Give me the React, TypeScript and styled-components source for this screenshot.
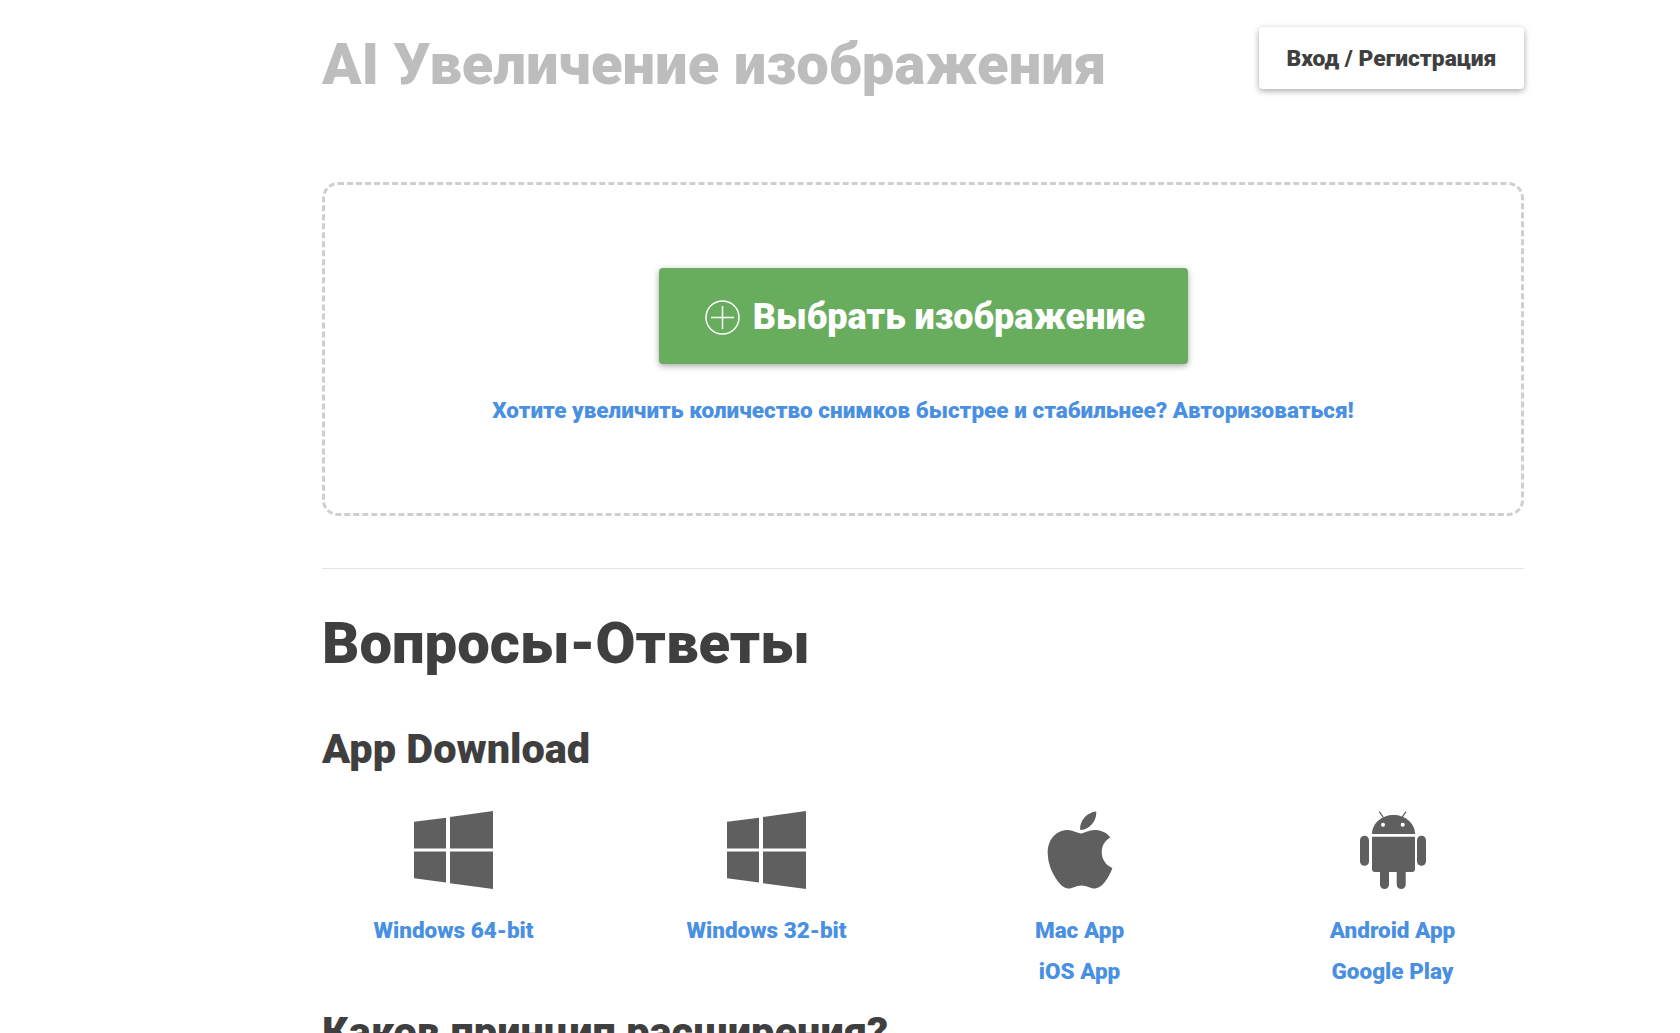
import * as React from 'react';
import styled, { createGlobalStyle } from 'styled-components';
import { FaApple } from 'react-icons/fa';

const GlobalStyle = createGlobalStyle`
  html, body {
    margin: 0;
    padding: 0;
    background: #fff;
    height: 1033px;
    overflow: hidden;
    font-family: Roboto, "Liberation Sans", sans-serif;
  }
`;

const Page = styled.div`
  width: 1202px;
  margin-left: 322px;
`;

const Header = styled.header`
  display: flex;
  justify-content: space-between;
  align-items: flex-start;
  padding-top: 27px;
  height: 182px;
  box-sizing: border-box;
`;

const Title = styled.h1`
  margin: 6px 0 0;
  font-size: 58px;
  line-height: 62px;
  font-weight: 900;
  color: #bdbdbd;
`;

const LoginButton = styled.button`
  width: 265px;
  height: 62px;
  border: none;
  border-radius: 4px;
  background: #fff;
  color: #3f3f3f;
  font: 900 22.8px Roboto, sans-serif;
  box-shadow: 0 2px 6px rgba(0, 0, 0, 0.35);
`;

const DropZone = styled.section`
  height: 334px;
  box-sizing: border-box;
  border: 3px dashed #cfcfcf;
  border-radius: 16px;
  display: flex;
  flex-direction: column;
  align-items: center;
  padding-top: 83px;
`;

const UploadButton = styled.button`
  width: 529px;
  height: 96px;
  padding: 2px 0 0 4px;
  border: none;
  border-radius: 4px;
  background: #68ad5e;
  color: #fff;
  font: 900 36px Roboto, sans-serif;
  display: flex;
  align-items: center;
  justify-content: center;
  gap: 13px;
  box-shadow: 0 2px 6px rgba(0, 0, 0, 0.35);
`;

const PlusIcon = styled.svg`
  width: 35px;
  height: 35px;
  fill: none;
  stroke: #fff;
  stroke-width: 1.5;
`;

const Hint = styled.a`
  margin-top: 32px;
  font-size: 22.5px;
  line-height: 28px;
  font-weight: 900;
  color: #4a90e2;
`;

const Divider = styled.hr`
  margin: 52px 0 0;
  border: none;
  border-top: 1px solid #e4e4e4;
`;

const FaqTitle = styled.h2`
  margin: 41px 0 0;
  font-size: 58px;
  line-height: 66px;
  font-weight: 900;
  color: #3f3f3f;
`;

const SectionTitle = styled.h3`
  margin: 0;
  font-size: 41.5px;
  line-height: 48px;
  font-weight: 900;
  color: #3f3f3f;
`;

const DownloadTitle = styled(SectionTitle)`
  margin-top: 49px;
`;

const Downloads = styled.div`
  display: grid;
  grid-template-columns: repeat(4, 313px);
  margin: 38px -25px 0;
  height: 197px;
`;

const Platform = styled.div`
  display: flex;
  flex-direction: column;
  align-items: center;
`;

const IconSlot = styled.div`
  height: 78px;
  margin-bottom: 21px;
  display: flex;
  align-items: center;
  justify-content: center;
  color: #5f5f5f;

  svg {
    fill: currentColor;
    flex: none;
  }
`;

const DownloadLink = styled.a`
  font-size: 22.5px;
  line-height: 41px;
  font-weight: 900;
  color: #4a90e2;
`;

const WindowsIcon = () => (
  <svg width="79" height="78" viewBox="0 0 79 78">
    <path d="M0 10.7 32 6.7V37.5H0Z" />
    <path d="M36 6 79 0V37.5H36Z" />
    <path d="M0 40.5H32V71.5L0 67.2Z" />
    <path d="M36 40.5H79V78L36 72.2Z" />
  </svg>
);

const AndroidIcon = () => (
  <svg width="66" height="78" viewBox="0 0 66 78">
    <path d="M12 23C12 12 22 4 33.5 4S55 12 55 23Z" />
    <path d="M12 25.7H55V58a3 3 0 0 1-3 3H15a3 3 0 0 1-3-3Z" />
    <rect x="0" y="24.7" width="9" height="30" rx="4.5" />
    <rect x="57" y="24.7" width="9" height="30" rx="4.5" />
    <rect x="20" y="50" width="9" height="28" rx="4.5" />
    <rect x="36.7" y="50" width="9" height="28" rx="4.5" />
    <path d="M19.3.7l4 5.6M46 .7l-4 5.6" stroke="#5f5f5f" strokeWidth="1.2" />
    <circle cx="23" cy="13.7" r="2" fill="#fff" />
    <circle cx="42.7" cy="13.7" r="2" fill="#fff" />
  </svg>
);

const platforms = [
  { icon: <WindowsIcon />, links: ['Windows 64-bit'] },
  { icon: <WindowsIcon />, links: ['Windows 32-bit'] },
  { icon: <FaApple size={88} />, links: ['Mac App', 'iOS App'] },
  { icon: <AndroidIcon />, links: ['Android App', 'Google Play'] },
];

const App: React.FC = () => {
  return (
    <Page>
      <GlobalStyle />
      <Header>
        <Title>AI Увеличение изображения</Title>
        <LoginButton>Вход / Регистрация</LoginButton>
      </Header>
      <DropZone>
        <UploadButton>
          <PlusIcon viewBox="0 0 35 35">
            <circle cx="17.5" cy="17.5" r="16.5" />
            <path d="M17.5 6v23M6 17.5h23" />
          </PlusIcon>
          Выбрать изображение
        </UploadButton>
        <Hint>Хотите увеличить количество снимков быстрее и стабильнее? Авторизоваться!</Hint>
      </DropZone>
      <Divider />
      <FaqTitle>Вопросы-Ответы</FaqTitle>
      <DownloadTitle>App Download</DownloadTitle>
      <Downloads>
        {platforms.map(platform => (
          <Platform key={platform.links[0]}>
            <IconSlot>{platform.icon}</IconSlot>
            {platform.links.map(link => (
              <DownloadLink key={link}>{link}</DownloadLink>
            ))}
          </Platform>
        ))}
      </Downloads>
      <SectionTitle>Каков принцип расширения?</SectionTitle>
    </Page>
  );
};

export default App;
